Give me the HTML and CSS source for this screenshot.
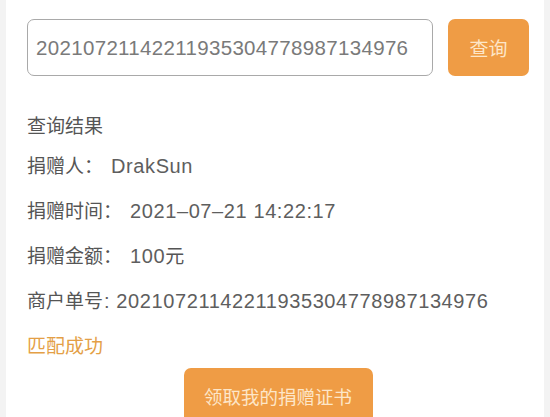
FILE: index.html
```html
<!DOCTYPE html>
<html lang="zh-CN">
<head>
<meta charset="utf-8">
<link rel="stylesheet" href="styles.css">
</head>
<body>
<div class="page">
  <div class="search">
    <div class="input">20210721142211935304778987134976</div>
    <button class="query">查询</button>
  </div>
  <div class="title">查询结果</div>
  <div class="details">
    <div class="line">捐赠人：<span class="val">DrakSun</span></div>
    <div class="line">捐赠时间：<span class="val">2021–07–21 14:22:17</span></div>
    <div class="line">捐赠金额：<span class="val">100</span>元</div>
    <div class="line">商户单号<span class="val tight">: 20210721142211935304778987134976</span></div>
    <div class="line ok">匹配成功</div>
  </div>
  <div class="actions">
    <button class="cert">领取我的捐赠证书</button>
  </div>
</div>
</body>
</html>
```
FILE: styles.css
```css
html, body {
  margin: 0;
  padding: 0;
  background: #fff;
  overflow: hidden;
}
body {
  width: 550px;
  height: 417px;
  font-family: "Noto Sans CJK SC", sans-serif;
  color: #555;
}
.page {
  padding: 19px 21px 0 27px;
  height: 417px;
  box-sizing: border-box;
  background: linear-gradient(to right, #f3f3f3 0, #f3f3f3 6px, #fff 6px, #fff 544px, #f3f3f3 544px);
}
.search {
  display: flex;
  gap: 15px;
  height: 57px;
}
.input {
  width: 406px;
  box-sizing: border-box;
  border: 1.5px solid #a9a9a9;
  border-radius: 7px;
  padding-left: 8px;
  display: flex;
  align-items: center;
  font-family: "Liberation Sans", sans-serif;
  font-size: 20.5px;
  color: #7a7a7a;
  letter-spacing: 0.33px;
}
.query {
  width: 81px;
  border: none;
  border-radius: 7px;
  background: #ef9c45;
  color: #fde6c8;
  font-family: "Noto Sans CJK SC", sans-serif;
  font-size: 19px;
  padding: 0;
}
.title {
  margin-top: 35px;
  font-size: 19px;
  line-height: 28px;
}
.details {
  margin-top: 11.5px;
  display: flex;
  flex-direction: column;
  gap: 17px;
}
.line {
  font-size: 19px;
  line-height: 28px;
  height: 28px;
}
.val {
  font-family: "Liberation Sans", sans-serif;
  font-size: 20px;
  line-height: 20px;
  letter-spacing: 0.6px;
  color: #5e5e5e;
  margin-left: 8px;
}
.val.tight {
  margin-left: 1px;
}
.ok {
  color: #e49f46;
}
.actions {
  margin-top: 9px;
  display: flex;
  justify-content: center;
}
.cert {
  width: 189px;
  height: 56px;
  border: none;
  border-radius: 7px 7px 0 0;
  background: #ef9c45;
  color: #fde6c8;
  font-family: "Noto Sans CJK SC", sans-serif;
  font-size: 18.5px;
  padding: 0;
}
```
